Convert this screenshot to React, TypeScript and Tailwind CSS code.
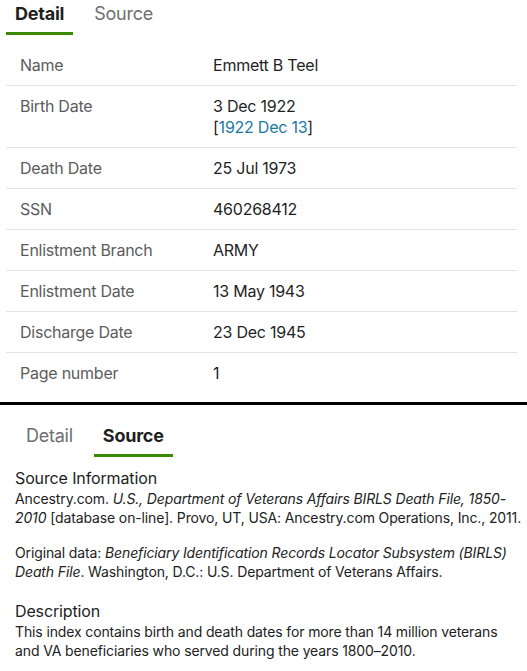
import React from 'react';

type Row = { label: string; value: React.ReactNode };

const rows: Row[] = [
  { label: 'Name', value: 'Emmett B Teel' },
  {
    label: 'Birth Date',
    value: (
      <>
        <div>3 Dec 1922</div>
        <div>
          [<span className="text-[#1b78a3]">1922 Dec 13</span>]
        </div>
      </>
    ),
  },
  { label: 'Death Date', value: '25 Jul 1973' },
  { label: 'SSN', value: '460268412' },
  { label: 'Enlistment Branch', value: 'ARMY' },
  { label: 'Enlistment Date', value: '13 May 1943' },
  { label: 'Discharge Date', value: '23 Dec 1945' },
  { label: 'Page number', value: '1' },
];

const Tabs = ({ active }: { active: 'Detail' | 'Source' }) => (
  <div className="flex gap-3">
    {(['Detail', 'Source'] as const).map((t) => (
      <div
        key={t}
        className={`px-[9px] pt-[3px] pb-[7px] text-[18px] leading-[22px] border-b-[3px] ${
          t === active
            ? 'font-bold text-[#1f1f1f] border-[#3a8a00]'
            : 'text-[#6e6e6e] border-transparent'
        }`}
      >
        {t}
      </div>
    ))}
  </div>
);

export default function App() {
  return (
    <div
      className="w-[527px] bg-white text-[#1f1f1f] tracking-[-0.015em]"
      style={{ fontFamily: 'Inter, "Noto Sans", sans-serif' }}
    >
      {/* Detail panel */}
      <div className="ml-[6px] mr-[10px]">
        <Tabs active="Detail" />
        <div className="mt-[10px]">
          {rows.map((r, i) => (
            <div
              key={r.label}
              className={`grid grid-cols-[207px_1fr] pt-[10px] pb-[9px] text-[16px] leading-[21px] ${
                i < rows.length - 1 ? 'border-b border-[#e3e3e3]' : ''
              }`}
            >
              <div className="pl-[14px] text-[#5c5c5c]">{r.label}</div>
              <div>{r.value}</div>
            </div>
          ))}
        </div>
      </div>

      <div className="mt-[9px] h-[3px] bg-black" />

      {/* Source panel */}
      <div className="mt-[17px] ml-[17px]">
        <Tabs active="Source" />
      </div>
      <div className="mt-[11px] pl-[15px] pr-[4px] text-[#222] tracking-[-0.008em]">
        <h3 className="text-[16px] leading-[21px]">Source Information</h3>
        <p className="text-[14px] leading-[19px]">
          Ancestry.com. <i>U.S., Department of Veterans Affairs BIRLS Death File, 1850-2010</i> [database
          on-line]. Provo, UT, USA: Ancestry.com Operations, Inc., 2011.
        </p>
        <p className="mt-[16px] text-[14px] leading-[19px]">
          Original data: <i>Beneficiary Identification Records Locator Subsystem (BIRLS) Death File</i>.
          Washington, D.C.: U.S. Department of Veterans Affairs.
        </p>
        <h3 className="mt-[20px] text-[16px] leading-[21px]">Description</h3>
        <p className="text-[14px] leading-[19px]">
          This index contains birth and death dates for more than 14 million veterans and VA beneficiaries
          who served during the years 1800–2010.
        </p>
      </div>
    </div>
  );
}
